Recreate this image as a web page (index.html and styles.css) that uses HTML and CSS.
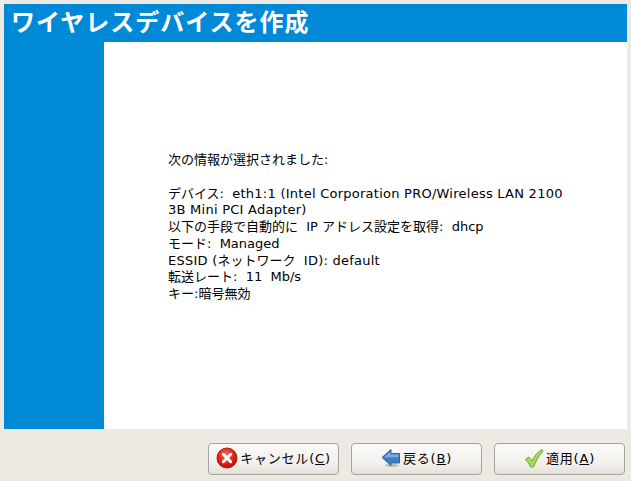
FILE: index.html
```html
<!DOCTYPE html>
<html lang="ja">
<head>
    <meta charset="UTF-8">
    <title>ワイヤレスデバイスを作成</title>
    <link rel="stylesheet" href="styles.css">
</head>
<body>

<div class="druid">
    <h1 class="druid-title">ワイヤレスデバイスを作成</h1>

    <div class="druid-body">
        <div class="side-bar"></div>
        <div class="content">
            <p class="summary">次の情報が選択されました:</p>
            <p class="summary">デバイス:&nbsp; <span class="latin">eth1:1 (Intel Corporation PRO/Wireless LAN 2100 3B Mini PCI Adapter)</span><br>
                以下の手段で自動的に&nbsp; IP アドレス設定を取得:&nbsp; dhcp<br>
                モード:&nbsp; Managed<br>
                <span class="latin">ESSID (</span>ネットワーク&nbsp; <span class="latin">ID): default</span><br>
                転送レート:&nbsp; 11&nbsp; Mb/s<br>
                キー:暗号無効</p>
        </div>
    </div>

    <div class="button-row">
        <button class="btn" type="button">
            <svg class="btn-icon" width="22" height="22" viewBox="0 0 22 22">
                <defs>
                    <radialGradient id="redBall" cx="45%" cy="35%" r="70%">
                        <stop offset="0" stop-color="#f4675a"/>
                        <stop offset="0.6" stop-color="#dd2314"/>
                        <stop offset="1" stop-color="#a5100a"/>
                    </radialGradient>
                </defs>
                <circle cx="11" cy="11" r="10" fill="url(#redBall)" stroke="#a81b10"/>
                <path d="M7.3 7.3L14.7 14.7M14.7 7.3L7.3 14.7" stroke="#fff" stroke-width="3" stroke-linecap="round"/>
            </svg>
            <span class="btn-label">キャンセル(<u>C</u>)</span>
        </button>
        <button class="btn" type="button">
            <svg class="btn-icon" width="20" height="20" viewBox="0 0 20 20">
                <ellipse cx="11" cy="17.5" rx="7" ry="1.5" fill="#bdbab4"/>
                <path d="M1 9.5L10 1.5V5.5H18.5V15H10V17.5Z" fill="#3f7fc4" stroke="#2f64a3"/>
                <path d="M3 9.5L9.5 3.8V6.5H17.5V9Z" fill="#7eaee0"/>
            </svg>
            <span class="btn-label">戻る(<u>B</u>)</span>
        </button>
        <button class="btn" type="button">
            <svg class="btn-icon" width="20" height="20" viewBox="0 0 20 20">
                <path d="M1.5 11.5L5 9L8 13C10 8.5 13.5 4 18 1.5L19 3C15 7.5 12 13 9.5 19H6.5C5.5 16 3.5 13.5 1.5 11.5Z" fill="#a4dc5e" stroke="#6ea52f"/>
            </svg>
            <span class="btn-label">適用(<u>A</u>)</span>
        </button>
    </div>
</div>

</body>
</html>
```

FILE: styles.css
```css
html, body {
    height: 100%;
}

body {
    margin: 0;
    background-color: #edeae4;
    font-family: "DejaVu Sans", "Noto Sans CJK JP", sans-serif;
    font-size: 13px;
    color: #000;
    overflow: hidden;
}

.druid {
    height: 481px;
    padding: 4px 4px 0 4px;
    box-sizing: border-box;
    display: flex;
    flex-direction: column;
}

.druid-title {
    margin: 0;
    height: 38px;
    line-height: 39px;
    padding-left: 7px;
    background-color: #0089d6;
    color: white;
    font-size: 24px;
    font-weight: bold;
    letter-spacing: 1px;
}

.druid-body {
    display: flex;
    height: 387px;
}

.side-bar {
    width: 100px;
    background-color: #0089d6;
}

.content {
    flex: 1;
    background-color: white;
    padding: 110px 0 0 64px;
}

.summary {
    margin: 0 0 16.75px 0;
    width: 398px;
    line-height: 16.75px;
}

.latin {
    letter-spacing: 0.25px;
}

.button-row {
    display: flex;
    justify-content: flex-end;
    gap: 12px;
    padding: 14px 2px 0 0;
}

.btn {
    width: 131px;
    height: 32px;
    padding: 0 0 3px 0;
    display: flex;
    align-items: center;
    justify-content: center;
    gap: 2px;
    border: 1px solid #a8a49c;
    border-radius: 4px;
    background: linear-gradient(#fbfafa, #f3f1ed 60%, #e4e1da);
    font-family: inherit;
    font-size: 13px;
    color: #000;
}

.btn-label {
    letter-spacing: 0.8px;
}

.btn-icon {
    flex: none;
}
```
